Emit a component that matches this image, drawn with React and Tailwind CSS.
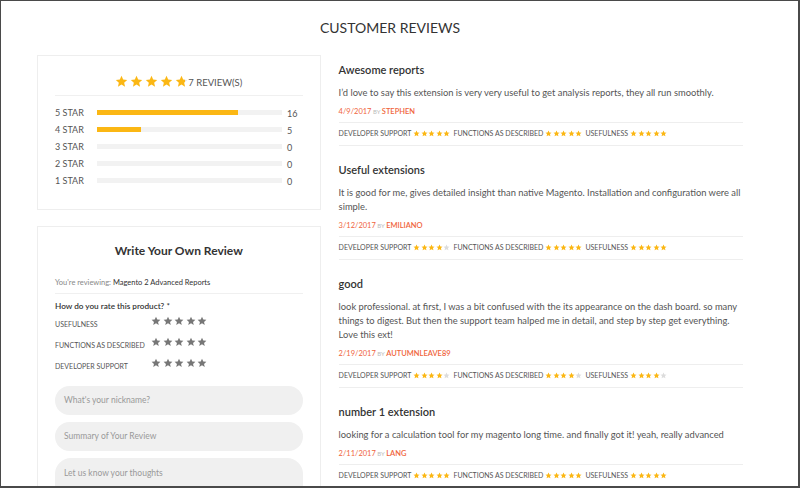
import React from 'react';

const font = { fontFamily: "Lato, 'Liberation Sans', sans-serif" };

const StarIcon = ({ className = '', fill = 'currentColor' }) => (
    <svg viewBox="0 0 24 24" className={className} fill={fill}>
        <path d="M12 1.5l3.1 6.9 7.4.7-5.6 5 1.7 7.4L12 17.6l-6.6 3.9 1.7-7.4-5.6-5 7.4-.7z" />
    </svg>
);

const HalfStar = ({ className = '' }) => (
    <svg viewBox="0 0 24 24" className={className}>
        <defs>
            <linearGradient id="half">
                <stop offset="78%" stopColor="#fbb714" />
                <stop offset="78%" stopColor="#e2e2e2" />
            </linearGradient>
        </defs>
        <path fill="url(#half)" d="M12 1.5l3.1 6.9 7.4.7-5.6 5 1.7 7.4L12 17.6l-6.6 3.9 1.7-7.4-5.6-5 7.4-.7z" />
    </svg>
);

const SmallStars = ({ count }) => (
    <span className="flex items-center gap-[0.5px] mx-[2px]">
        {[0, 1, 2, 3, 4].map((i) => (
            <StarIcon key={i} className={`w-[7px] h-[7px] ${i < count ? 'text-[#fbb714]' : 'text-[#dcdcdc]'}`} />
        ))}
    </span>
);

const bars = [
    { label: '5 STAR', pct: 76, count: 16 },
    { label: '4 STAR', pct: 24, count: 5 },
    { label: '3 STAR', pct: 0, count: 0 },
    { label: '2 STAR', pct: 0, count: 0 },
    { label: '1 STAR', pct: 0, count: 0 },
];

const reviews = [
    {
        title: 'Awesome reports',
        body: 'I\u2019d love to say this extension is very very useful to get analysis reports, they all run smoothly.',
        date: '4/9/2017',
        by: 'STEPHEN',
        dev: 5, func: 5, use: 5,
    },
    {
        title: 'Useful extensions',
        body: 'It is good for me, gives detailed insight than native Magento. Installation and configuration were all simple.',
        date: '3/12/2017',
        by: 'EMILIANO',
        dev: 4, func: 5, use: 5,
    },
    {
        title: 'good',
        body: 'look professional. at first, I was a bit confused with the its appearance on the dash board. so many things to digest. But then the support team halped me in detail, and step by step get everything. Love this ext!',
        date: '2/19/2017',
        by: 'AUTUMNLEAVE89',
        dev: 4, func: 4, use: 4,
    },
    {
        title: 'number 1 extension',
        body: 'looking for a calculation tool for my magento long time. and finally got it! yeah, really advanced',
        date: '2/11/2017',
        by: 'LANG',
        dev: 5, func: 5, use: 5,
    },
];

const formRatings = ['USEFULNESS', 'FUNCTIONS AS DESCRIBED', 'DEVELOPER SUPPORT'];

export default function App() {
    return (
        <div
            className="w-[800px] h-[488px] overflow-hidden bg-white border-t border-l border-r-2 border-b-2 border-[#4a4a4a] text-[#333]"
            style={font}
        >
            <div className="ml-[36px] w-[706px]">
                <h1 className="text-center text-[14px] leading-[20px] pt-[17px] text-[#333]">
                    CUSTOMER REVIEWS
                </h1>

                <div className="flex mt-[17px]">
                    {/* left column */}
                    <div className="w-[284px] flex flex-col gap-[16px]">
                        <div className="border border-[#eeeeee] h-[155px] px-[17px] pt-[17px]">
                            <div className="flex items-center justify-center pb-[5px] border-b border-[#f0f0f0]">
                                <div className="flex gap-[2px] items-center">
                                    {[0, 1, 2, 3].map((i) => (
                                        <StarIcon key={i} className="w-[13px] h-[13px] text-[#fbb714]" />
                                    ))}
                                    <HalfStar className="w-[13px] h-[13px]" />
                                </div>
                                <span className="text-[9.5px] text-[#555] mt-[3px]">7 REVIEW(S)</span>
                            </div>
                            <div className="pt-[8px]">
                                {bars.map((b) => (
                                    <div key={b.label} className="flex items-center h-[17px]">
                                        <span className="w-[42px] text-[9px] text-[#555]">{b.label}</span>
                                        <div className="w-[185px] h-[5px] bg-[#f2f2f2]">
                                            <div className="h-full bg-[#fbb714]" style={{ width: `${b.pct}%` }} />
                                        </div>
                                        <span className="ml-[5px] text-[9px] text-[#555] mt-[2px]">{b.count}</span>
                                    </div>
                                ))}
                            </div>
                        </div>

                        <div className="border border-[#eeeeee] h-[300px] px-[17px] pt-[15px]">
                            <h2 className="text-center text-[12px] font-bold text-[#333] leading-[18px]">
                                Write Your Own Review
                            </h2>
                            <div className="mt-[18px] pb-[5px] border-b border-[#f0f0f0] text-[7.5px] leading-[10px]">
                                <span className="text-[#888]">You're reviewing: </span>
                                <span className="text-[#333]">Magento 2 Advanced Reports</span>
                            </div>
                            <div className="mt-[6px] text-[8.2px] font-semibold text-[#333] leading-[12px]">
                                How do you rate this product? *
                            </div>
                            <div className="mt-[4px] flex flex-col gap-[7px]">
                                {formRatings.map((r) => (
                                    <div key={r} className="flex items-start h-[14px]">
                                        <span className="w-[96px] text-[7px] text-[#555] mt-[3px]">{r}</span>
                                        <div className="flex gap-[1.5px]">
                                            {[0, 1, 2, 3, 4].map((i) => (
                                                <StarIcon key={i} className="w-[10px] h-[10px] text-[#777]" />
                                            ))}
                                        </div>
                                    </div>
                                ))}
                            </div>
                            <div className="mt-[14px] flex flex-col gap-[7px]">
                                <div className="h-[29px] rounded-full bg-[#f0f0f0] flex items-center pl-[9px] text-[8.5px] text-[#999]">
                                    What's your nickname?
                                </div>
                                <div className="h-[29px] rounded-full bg-[#f0f0f0] flex items-center pl-[9px] text-[8.5px] text-[#999]">
                                    Summary of Your Review
                                </div>
                                <div className="h-[60px] rounded-[16px] bg-[#f0f0f0] pl-[9px] pt-[9px] text-[8.5px] text-[#999]">
                                    Let us know your thoughts
                                </div>
                            </div>
                        </div>
                    </div>

                    {/* right column */}
                    <div className="ml-[18px] w-[405px]">
                        {reviews.map((r, idx) => (
                            <div key={r.title} className={idx === 0 ? 'mt-[7px]' : 'mt-[16px]'}>
                                <div className="text-[11px] font-semibold leading-[16px] text-[#333]">{r.title}</div>
                                <p className="mt-[8px] text-[9.35px] leading-[14px] text-[#555]">{r.body}</p>
                                <div className="mt-[6px] pb-[4px] border-b border-[#eeeeee] text-[7.5px] leading-[12px]">
                                    <span className="text-[#f0643c]">{r.date}</span>
                                    <span className="text-[#bbb] text-[6px]"> BY </span>
                                    <span className="text-[#f0643c] font-semibold">{r.by}</span>
                                </div>
                                <div className="pb-[1px] border-b border-[#eeeeee] flex items-center h-[23px] text-[7px] text-[#555]">
                                    <span>DEVELOPER SUPPORT</span>
                                    <SmallStars count={r.dev} />
                                    <span className="ml-[1px]">FUNCTIONS AS DESCRIBED</span>
                                    <SmallStars count={r.func} />
                                    <span className="ml-[1px]">USEFULNESS</span>
                                    <SmallStars count={r.use} />
                                </div>
                            </div>
                        ))}
                    </div>
                </div>
            </div>
        </div>
    );
}
